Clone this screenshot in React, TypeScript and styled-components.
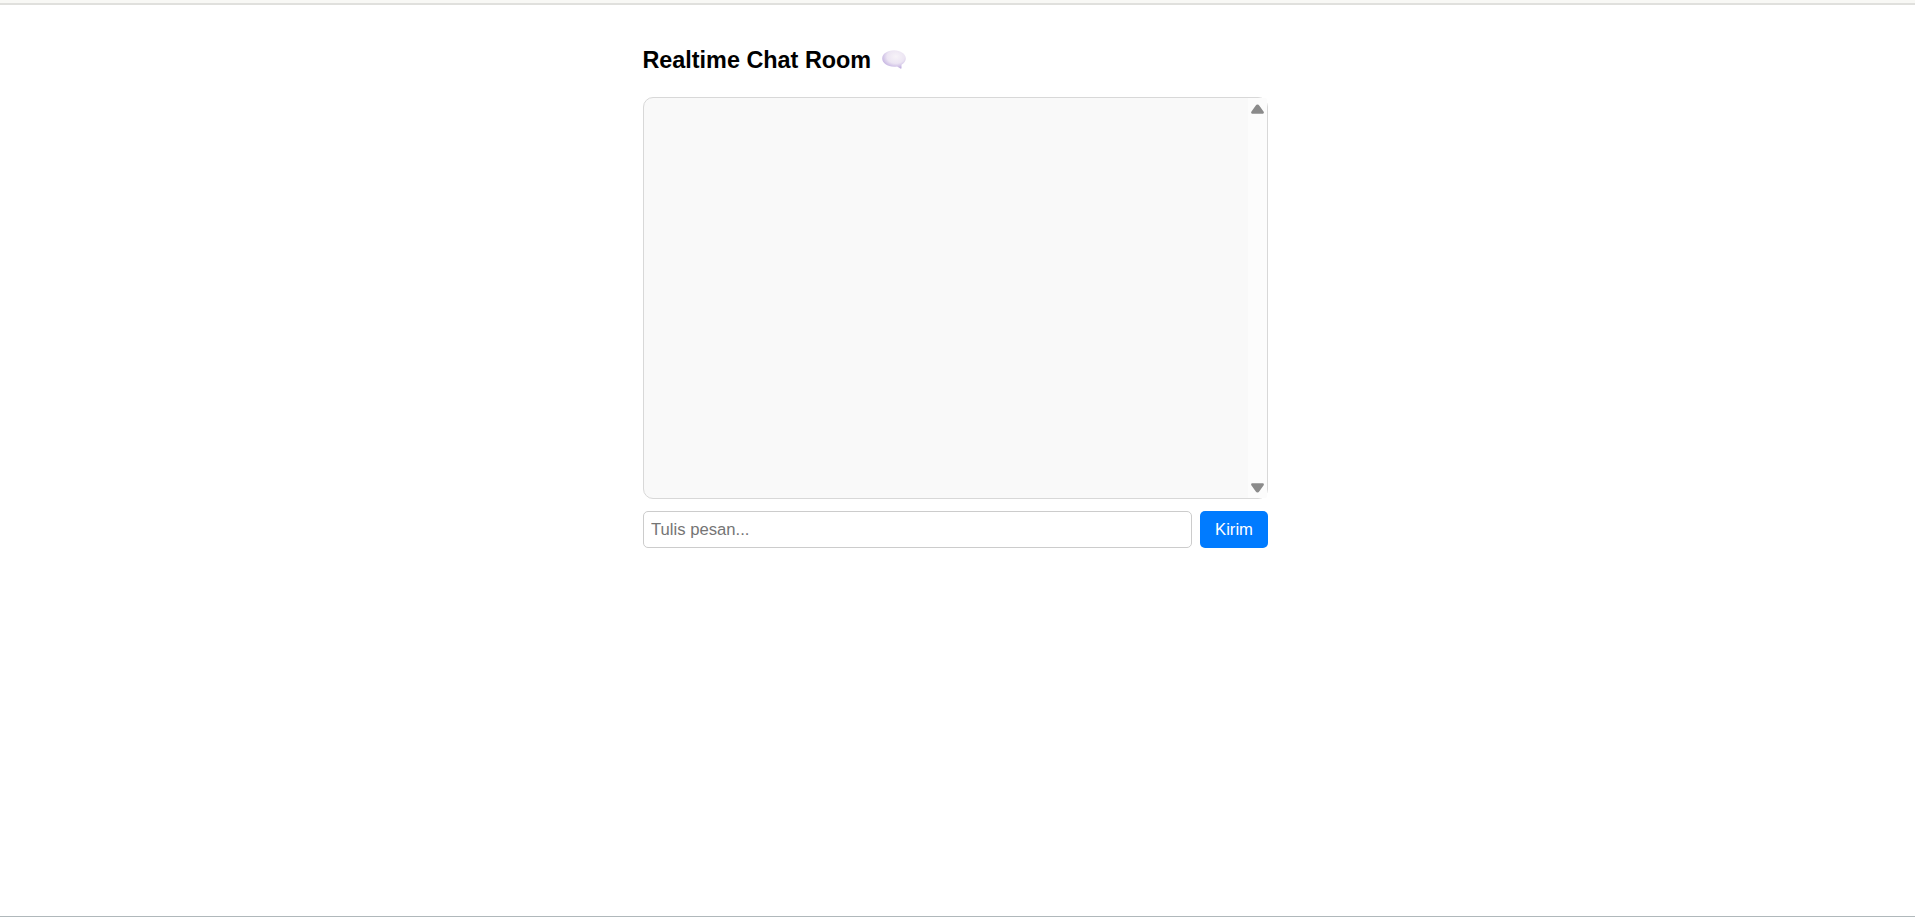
import React, { useState } from "react";
import styled, { createGlobalStyle } from "styled-components";

const GlobalStyle = createGlobalStyle`
  * { box-sizing: border-box; }
  body { margin: 0; background: #fff; font-family: "Liberation Sans", Arial, sans-serif; }
`;

const Page = styled.div`
  display: flex;
  flex-direction: column;
  height: 917px;
  border-bottom: 1px solid #b0b8bb;
`;

const TopEdge = styled.div`
  flex: none;
  height: 5px;
  background: #f8f8f5;
  border-bottom: 2px solid #e0e0dd;
`;

const Room = styled.main`
  width: 625px;
  margin-left: 643px;
  padding-top: 41px;
`;

const Title = styled.h3`
  display: flex;
  align-items: center;
  gap: 11px;
  height: 28px;
  margin: 0 0 23px -0.6px;
  font-size: 23.4px;
  line-height: 28px;
  font-weight: 700;
  color: #000;
  white-space: nowrap;
`;

const Messages = styled.section`
  display: flex;
  justify-content: flex-end;
  height: 402px;
  border: 1px solid #d8d8d8;
  border-radius: 10px;
  background: #f9f9f9;
`;

const ScrollTrack = styled.div`
  display: flex;
  flex-direction: column;
  justify-content: space-between;
  align-items: center;
  width: 19px;
  padding: 6px 0 5px;
  border-radius: 0 2px 2px 0;
  background: #fcfcfc;
`;

const Composer = styled.form`
  display: flex;
  gap: 8px;
  height: 37px;
  margin-top: 12px;
`;

const MessageInput = styled.input`
  flex: 1;
  min-width: 0;
  padding: 0 7px;
  border: 1px solid #ccc;
  border-radius: 5px;
  font: 16.667px "Liberation Sans", Arial, sans-serif;
  &::placeholder { color: #757575; }
`;

const SendButton = styled.button`
  width: 68px;
  padding: 0;
  border: 0;
  border-radius: 5px;
  background: #007bff;
  color: #fff;
  font: 16.667px "Liberation Sans", Arial, sans-serif;
`;

const BubbleIcon = styled.svg`
  display: block;
  flex: none;
  margin-bottom: 1px;
`;

const SpeechBubble = () => (
  <BubbleIcon width="24" height="19" viewBox="0 0 24 19" aria-hidden="true">
    <defs>
      <radialGradient id="bubble" cx="0.58" cy="0.34" r="0.68">
        <stop offset="0" stopColor="#f7f3f8" />
        <stop offset="0.55" stopColor="#ece5f3" />
        <stop offset="1" stopColor="#bdaade" />
      </radialGradient>
    </defs>
    <path
      d="M12 .3C18.6.3 23.8 3.9 23.8 8.5c0 2.5-1.7 4.7-4.3 6.2v3.4c0 .6-.7.7-1.1.4l-3.3-2.1c-1 .2-2 .3-3.1.3C5.4 16.7.2 13.1.2 8.5S5.4.3 12 .3Z"
      fill="url(#bubble)"
    />
  </BubbleIcon>
);

const Arrow = ({ down = false }: { down?: boolean }) => (
  <svg width="13" height="10" viewBox="0 0 13 10" aria-hidden="true">
    <path
      d={
        down
          ? "M1.5.2h10c1.3 0 1.8 1.2 1 2.3L8.4 8.2c-1 1.6-2.8 1.6-3.8 0L.5 2.5C-.3 1.4.2.2 1.5.2Z"
          : "M1.5 9.8h10c1.3 0 1.8-1.2 1-2.3L8.4 1.8C7.4.2 5.6.2 4.6 1.8L.5 7.5C-.3 8.6.2 9.8 1.5 9.8Z"
      }
      fill="#8b8b8b"
    />
  </svg>
);

export default function App() {
  const [text, setText] = useState("");
  return (
    <>
      <GlobalStyle />
      <Page>
        <TopEdge />
        <Room>
          <Title>
            <span>Realtime Chat Room</span>
            <SpeechBubble />
          </Title>
          <Messages>
            <ScrollTrack>
              <Arrow />
              <Arrow down />
            </ScrollTrack>
          </Messages>
          <Composer onSubmit={(e) => e.preventDefault()}>
            <MessageInput
              placeholder="Tulis pesan..."
              value={text}
              onChange={(e) => setText(e.target.value)}
            />
            <SendButton type="submit">Kirim</SendButton>
          </Composer>
        </Room>
      </Page>
    </>
  );
}
